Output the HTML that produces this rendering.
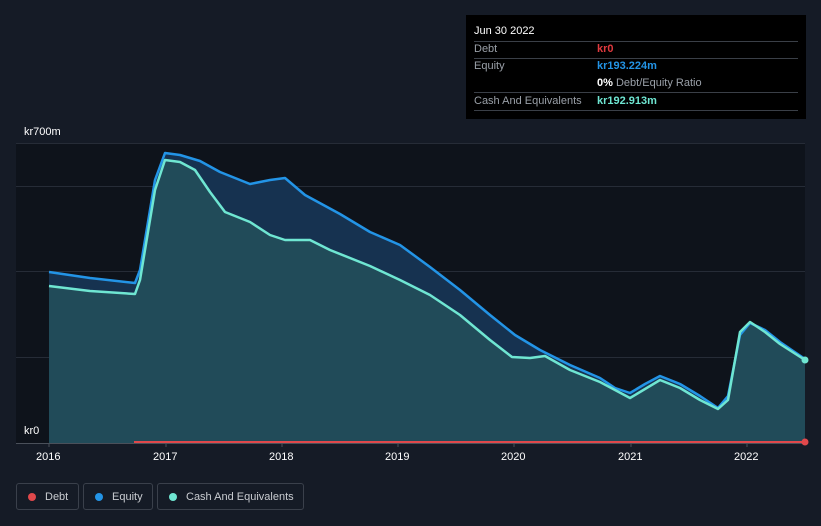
<!DOCTYPE html><html><head><style>
body{margin:0;width:821px;height:526px;background:#151b26;font-family:"Liberation Sans",sans-serif;overflow:hidden;position:relative}
.tt{position:absolute;left:466px;top:15px;width:340px;height:104px;background:#000;color:#fff;font-size:11px}
.tt .r{position:absolute;left:8px;right:8px;border-bottom:1px solid #3a3f47;height:17px;line-height:17px;color:#9aa0a8}
.lg{position:absolute;top:483px;height:27px;border:1px solid #3a404b;border-radius:3px;color:#c9ccd1;font-size:11px;line-height:27px;box-sizing:border-box}
.lg i{position:absolute;left:11px;top:9px;width:8px;height:8px;border-radius:50%}
.ax{position:absolute;color:#fff;font-size:11px}
</style></head><body>
<svg width="821" height="526" style="position:absolute;left:0;top:0">
<rect x="16" y="143" width="789" height="300" fill="#0e131b"/>
<g stroke="#262c37" stroke-width="1">
<line x1="16" y1="143.5" x2="805" y2="143.5"/><line x1="16" y1="186.5" x2="805" y2="186.5"/><line x1="16" y1="271.5" x2="805" y2="271.5"/><line x1="16" y1="357.5" x2="805" y2="357.5"/>
</g>
<path d="M49,272 L90,278 L135,283 L140,270 L155,180 L165,153 L180,155 L200,161 L220,172 L250,184 L270,180 L285,178 L305,195 L340,214 L370,232 L400,245 L430,267 L460,290 L490,315 L515,335 L540,350 L570,365 L600,378 L615,388 L630,393 L645,384 L660,376 L680,384 L700,396 L718,408 L728,396 L740,335 L750,323 L765,330 L780,342 L805,359 L805,443 L49,443Z" fill="#163250"/>
<path d="M49,286 L90,291 L135,294 L140,280 L155,190 L165,160 L180,162 L195,170 L210,192 L225,212 L250,222 L270,235 L285,240 L310,240 L330,250 L370,266 L400,280 L430,295 L460,315 L490,340 L512,357 L530,358 L545,356 L570,370 L600,382 L630,398 L660,380 L680,388 L700,400 L718,409 L728,400 L740,332 L750,322 L765,332 L780,344 L805,360 L805,443 L49,443Z" fill="#23505a" opacity="0.85"/>
<path d="M49,272 L90,278 L135,283 L140,270 L155,180 L165,153 L180,155 L200,161 L220,172 L250,184 L270,180 L285,178 L305,195 L340,214 L370,232 L400,245 L430,267 L460,290 L490,315 L515,335 L540,350 L570,365 L600,378 L615,388 L630,393 L645,384 L660,376 L680,384 L700,396 L718,408 L728,396 L740,335 L750,323 L765,330 L780,342 L805,359" fill="none" stroke="#2394e6" stroke-width="2.5" stroke-linejoin="round"/>
<path d="M49,286 L90,291 L135,294 L140,280 L155,190 L165,160 L180,162 L195,170 L210,192 L225,212 L250,222 L270,235 L285,240 L310,240 L330,250 L370,266 L400,280 L430,295 L460,315 L490,340 L512,357 L530,358 L545,356 L570,370 L600,382 L630,398 L660,380 L680,388 L700,400 L718,409 L728,400 L740,332 L750,322 L765,332 L780,344 L805,360" fill="none" stroke="#6fe6d2" stroke-width="2.5" stroke-linejoin="round"/>
<line x1="16" y1="443.5" x2="805" y2="443.5" stroke="#4a505a"/>
<line x1="134" y1="442" x2="805" y2="442" stroke="#e0484b" stroke-width="2"/>
<circle cx="805" cy="442" r="3.5" fill="#e0484b"/><circle cx="805" cy="360" r="3.5" fill="#6fe6d2"/>
<g stroke="#4a505a"><line x1="49" y1="443" x2="49" y2="447"/><line x1="166" y1="443" x2="166" y2="447"/><line x1="282" y1="443" x2="282" y2="447"/><line x1="398" y1="443" x2="398" y2="447"/><line x1="514" y1="443" x2="514" y2="447"/><line x1="631" y1="443" x2="631" y2="447"/><line x1="747" y1="443" x2="747" y2="447"/></g>
</svg>
<div class="ax" style="left:24px;top:126px">kr700m</div>
<div class="ax" style="left:24px;top:425px">kr0</div>
<div class="ax" style="left:36px;top:451px">2016</div><div class="ax" style="left:153px;top:451px">2017</div><div class="ax" style="left:269px;top:451px">2018</div><div class="ax" style="left:385px;top:451px">2019</div><div class="ax" style="left:501px;top:451px">2020</div><div class="ax" style="left:618px;top:451px">2021</div><div class="ax" style="left:734px;top:451px">2022</div>
<div class="tt">
<div style="position:absolute;left:8px;top:10px;color:#fff">Jun 30 2022</div>
<div style="position:absolute;left:8px;right:8px;top:26px;border-top:1px solid #3a3f47"></div>
<div class="r" style="top:26px">Debt<span style="position:absolute;left:123px;color:#e0393e;font-weight:bold">kr0</span></div>
<div class="r" style="top:43px;border:none">Equity<span style="position:absolute;left:123px;color:#2394e6;font-weight:bold">kr193.224m</span></div>
<div class="r" style="top:60px">&nbsp;<span style="position:absolute;left:123px"><b style="color:#fff">0%</b> Debt/Equity Ratio</span></div>
<div class="r" style="top:77px;height:18px;line-height:18px">Cash And Equivalents<span style="position:absolute;left:123px;color:#6fe6d2;font-weight:bold">kr192.913m</span></div>
</div>
<div class="lg" style="left:16px;width:63px"><i style="background:#e0484b"></i><span style="position:absolute;left:28px">Debt</span></div>
<div class="lg" style="left:83px;width:70px"><i style="background:#2394e6"></i><span style="position:absolute;left:28px">Equity</span></div>
<div class="lg" style="left:157px;width:147px"><i style="background:#6fe6d2"></i><span style="position:absolute;left:28px">Cash And Equivalents</span></div>
</body></html>
